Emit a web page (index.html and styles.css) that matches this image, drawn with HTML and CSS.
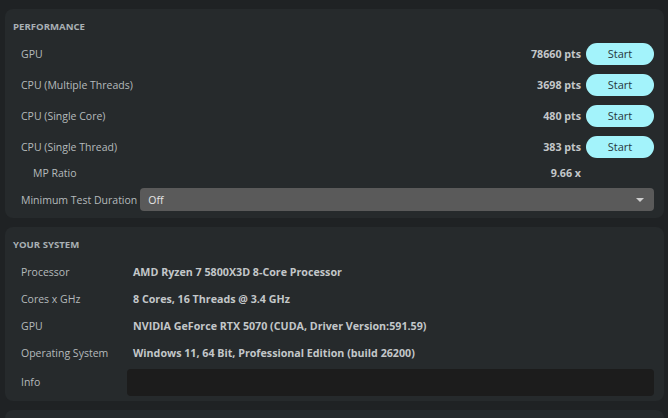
FILE: index.html
```html
<!DOCTYPE html>
<html>
<head>
<meta charset="utf-8">
<link rel="stylesheet" href="styles.css">
</head>
<body>
<div class="app">
  <section class="panel perf">
    <h2 class="panel-title">PERFORMANCE</h2>
    <div class="bench-list">
      <div class="bench-row">
        <span class="label">GPU</span>
        <span class="score">78660 pts</span>
        <button class="start-btn">Start</button>
      </div>
      <div class="bench-row">
        <span class="label">CPU (Multiple Threads)</span>
        <span class="score">3698 pts</span>
        <button class="start-btn">Start</button>
      </div>
      <div class="bench-row">
        <span class="label">CPU (Single Core)</span>
        <span class="score">480 pts</span>
        <button class="start-btn">Start</button>
      </div>
      <div class="bench-row">
        <span class="label">CPU (Single Thread)</span>
        <span class="score">383 pts</span>
        <button class="start-btn">Start</button>
      </div>
      <div class="ratio-row">
        <span class="label sub">MP Ratio</span>
        <span class="score">9.66 x</span>
        <span class="btn-spacer"></span>
      </div>
      <div class="duration-row">
        <span class="label">Minimum Test Duration</span>
        <div class="select">
          <span>Off</span>
          <svg class="caret" width="8" height="4" viewBox="0 0 8 4"><path d="M0 0H8L4 4Z" fill="#cfcfcf"/></svg>
        </div>
      </div>
    </div>
  </section>

  <section class="panel system">
    <h2 class="panel-title">YOUR SYSTEM</h2>
    <div class="sys-grid">
      <span class="label">Processor</span>
      <span class="value">AMD Ryzen 7 5800X3D 8-Core Processor</span>
      <span class="label">Cores x GHz</span>
      <span class="value">8 Cores, 16 Threads @ 3.4 GHz</span>
      <span class="label">GPU</span>
      <span class="value">NVIDIA GeForce RTX 5070 (CUDA, Driver Version:591.59)</span>
      <span class="label">Operating System</span>
      <span class="value">Windows 11, 64 Bit, Professional Edition (build 26200)</span>
      <span class="label info-label">Info</span>
      <div class="info-box"></div>
    </div>
  </section>

  <section class="panel stub"></section>
</div>
</body>
</html>
```

FILE: styles.css
```css
html, body {
  margin: 0;
  padding: 0;
  background: #1f2224;
  height: 100%;
  overflow: hidden;
}

body {
  font-family: "Open Sans", "Noto Sans", sans-serif;
  font-size: 10.5px;
  color: #b5babc;
}

.app {
  display: flex;
  flex-direction: column;
  gap: 9px;
  padding: 9px 4px 0 5px;
}

.panel {
  background: #262a2c;
  border-radius: 8px;
  padding: 10px 10px 7px 8px;
}

.panel-title {
  margin: 0;
  font-size: 9.6px;
  font-weight: 700;
  line-height: 15px;
  color: #a9b0b4;
}

.bench-list {
  display: flex;
  flex-direction: column;
  padding: 4px 0 0 8px;
}

.bench-row, .ratio-row {
  display: flex;
  align-items: center;
  height: 31px;
}

.ratio-row {
  height: 22px;
}

.label {
  color: #b5babc;
  white-space: nowrap;
}

.label.sub {
  padding-left: 12px;
}

.score {
  margin-left: auto;
  font-weight: 700;
  font-size: 10.7px;
  color: #c3c7c9;
  margin-right: 5px;
}

.start-btn {
  width: 68px;
  height: 22px;
  border: none;
  border-radius: 11px;
  background: #a3f3fb;
  color: #26383d;
  font-family: inherit;
  font-size: 11px;
  padding: 0;
}

.btn-spacer {
  width: 68px;
}

.duration-row {
  display: flex;
  align-items: center;
  gap: 3px;
  margin-top: 4px;
}

.select {
  flex: 1;
  height: 23px;
  background: #5a5a5a;
  border-radius: 4px;
  display: flex;
  align-items: center;
  justify-content: space-between;
  padding: 0 10px 0 8px;
  color: #e6e6e6;
}

.system {
  padding-bottom: 8px;
}

.sys-grid {
  display: grid;
  grid-template-columns: 106px 1fr;
  grid-auto-rows: 27px;
  align-items: center;
  padding: 6px 0 0 8px;
}

.value {
  font-weight: 700;
  font-size: 10.7px;
  color: #c3c7c9;
  padding-left: 6px;
  white-space: nowrap;
}

.info-label {
  margin-top: 5px;
}

.info-box {
  height: 27px;
  background: #1c1c1c;
  border-radius: 4px;
  margin-top: 5px;
}

.stub {
  height: 40px;
}
```
